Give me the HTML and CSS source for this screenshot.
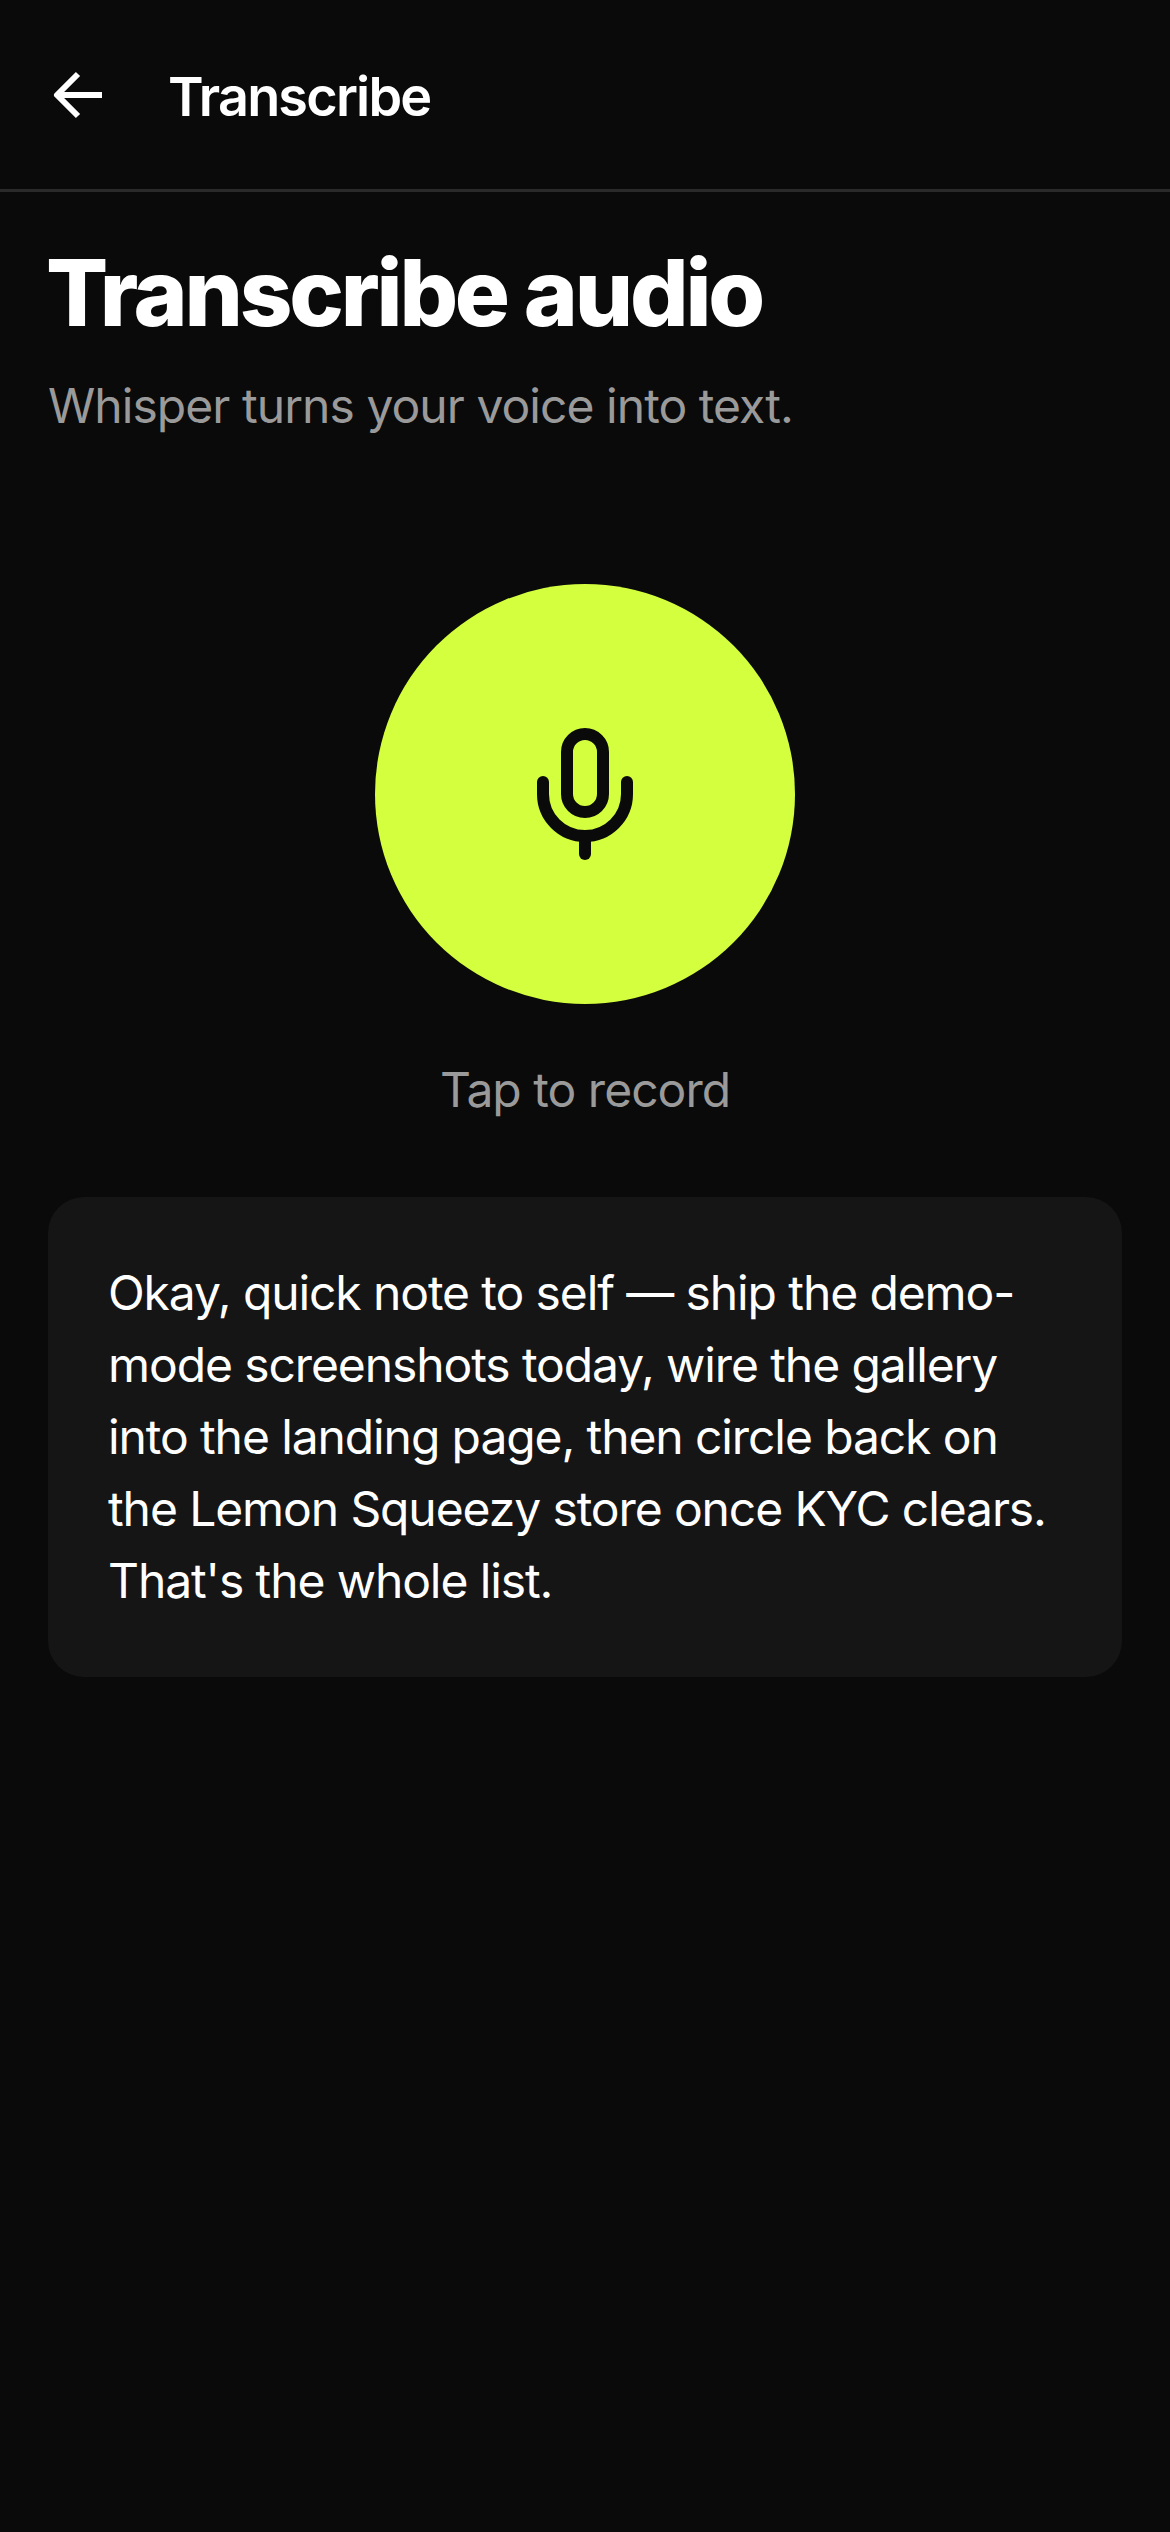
FILE: index.html
```html
<!DOCTYPE html>
<html lang="en">
<head>
    <meta charset="UTF-8">
    <meta name="viewport" content="width=device-width, initial-scale=1.0">
    <title>Transcribe</title>
    <link rel="stylesheet" href="styles.css">
</head>
<body>
    <header class="topbar">
        <a class="back-button" href="#" aria-label="Back">
            <svg class="back-icon" viewBox="0 0 24 24" fill="none" stroke="currentColor" stroke-width="2" stroke-linejoin="round">
                <path d="M12 19l-7-7 7-7"/>
                <path d="M20 12H5"/>
            </svg>
        </a>
        <span class="topbar-title">Transcribe</span>
    </header>

    <main class="page-content">
        <h1>Transcribe audio</h1>
        <p class="subtitle">Whisper turns your voice into text.</p>

        <div class="recorder">
            <button class="record-button" aria-label="Tap to record">
                <svg class="mic-icon" viewBox="0 0 24 24" fill="none" stroke="currentColor" stroke-width="2" stroke-linecap="round" stroke-linejoin="round">
                    <rect x="9" y="2" width="6" height="13" rx="3"/>
                    <path d="M19 10v2a7 7 0 0 1-14 0v-2"/>
                    <path d="M12 19v3"/>
                </svg>
            </button>
            <span class="record-hint">Tap to record</span>
        </div>

        <div class="transcript">
            Okay, quick note to self — ship the demo-mode screenshots today, wire the gallery into the landing page, then circle back on the Lemon Squeezy store once KYC clears. That's the whole list.
        </div>
    </main>
</body>
</html>
```

FILE: styles.css
```css
* {
    margin: 0;
    padding: 0;
    box-sizing: border-box;
}

body {
    font-family: 'Inter', 'Liberation Sans', sans-serif;
    background-color: #0a0a0a;
    color: #fff;
    min-height: 100vh;
}

.topbar {
    display: flex;
    align-items: center;
    gap: 54px;
    height: 192px;
    padding: 0 42px;
    border-bottom: 3px solid #2a2a2a;
}

.back-button {
    display: flex;
    color: #fff;
}

.back-icon {
    width: 72px;
    height: 72px;
}

.topbar-title {
    padding-top: 3px;
    font-size: 54px;
    font-weight: 600;
    letter-spacing: -1.8px;
}

.page-content {
    padding: 46px 48px 48px;
}

h1 {
    margin-left: -2px;
    font-size: 92px;
    font-weight: 800;
    line-height: 1.2;
    letter-spacing: -3.2px;
}

.subtitle {
    margin-top: 28px;
    font-size: 48px;
    line-height: 60px;
    letter-spacing: -0.95px;
    color: #9a9a9a;
}

.recorder {
    display: flex;
    flex-direction: column;
    align-items: center;
    gap: 56px;
    margin-top: 148px;
}

.record-button {
    display: flex;
    align-items: center;
    justify-content: center;
    width: 420px;
    height: 420px;
    border: none;
    border-radius: 50%;
    background-color: #d4ff3f;
    color: #0a0a0a;
}

.mic-icon {
    width: 144px;
    height: 144px;
}

.record-hint {
    font-size: 48px;
    line-height: 60px;
    letter-spacing: -0.98px;
    color: #9a9a9a;
}

.transcript {
    margin-top: 77px;
    padding: 60px;
    background-color: #151515;
    border-radius: 36px;
    font-size: 48px;
    line-height: 72px;
    letter-spacing: -1.1px;
}
```
